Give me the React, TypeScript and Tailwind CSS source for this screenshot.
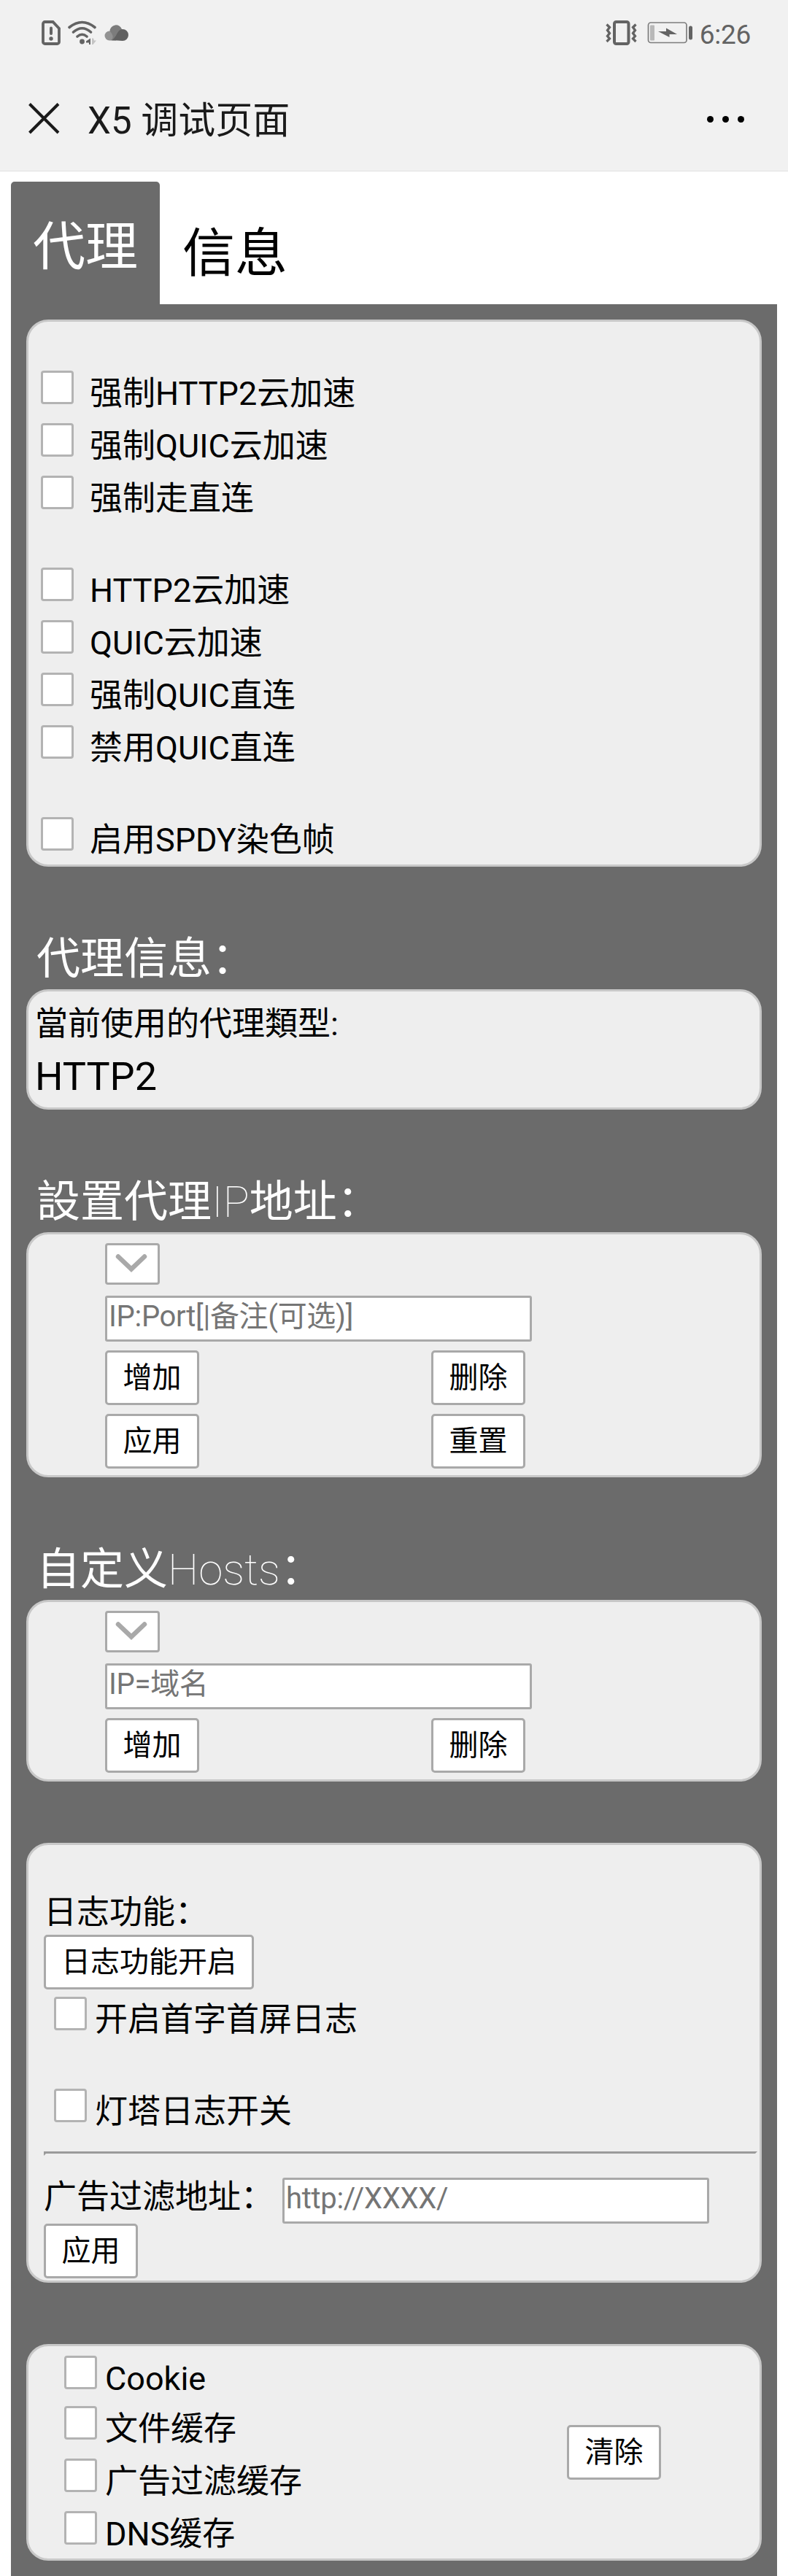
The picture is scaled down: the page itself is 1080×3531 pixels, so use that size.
import React from "react";

function Check({ label, gap = "gap-[22px]", height = "h-[72px]" }: { label: string; gap?: string; height?: string }) {
  return (
    <label className={`flex items-start ${gap} ${height}`}>
      <input
        type="checkbox"
        className="mt-[4px] h-[46px] w-[45px] shrink-0 appearance-none rounded-[4px] border-[3px] border-[#b3b3b3] bg-white"
      />
      <span className="whitespace-nowrap text-[45px] leading-[72px]">{label}</span>
    </label>
  );
}

function Btn({ label, className = "w-[129px]" }: { label: string; className?: string }) {
  return (
    <button
      className={`flex h-[75px] shrink-0 items-center justify-center whitespace-nowrap rounded-[5px] border-[3px] border-[#a9a9a9] bg-white text-[40px] leading-none ${className}`}
    >
      {label}
    </button>
  );
}

function Field({ placeholder }: { placeholder: string }) {
  return (
    <input
      placeholder={placeholder}
      className="block h-[63px] w-[585px] rounded-[3px] border-[3px] border-[#a9a9a9] bg-white px-[2px] pb-[7px] text-[40px] leading-[50px] tracking-[-0.3px] placeholder:text-[#757575]"
    />
  );
}

function Select() {
  return (
    <div className="flex h-[57px] w-[75px] items-center justify-center rounded-[4px] border-[3px] border-[#a9a9a9] bg-white pr-[3px]">
      <svg width="44" height="28" viewBox="0 0 44 28" fill="none" className="-mt-[2px] shrink-0">
        <path d="M4 4.500 22 21.500 40 4.500" stroke="#a9a9a9" strokeWidth="6.500" strokeLinecap="round" />
      </svg>
    </div>
  );
}

function Heading({ children }: { children: React.ReactNode }) {
  return (
    <h2 className="flex h-[168px] items-end pb-[11px] pl-[14px] text-[60px] leading-[60px] text-white">
      <span className="whitespace-nowrap">{children}</span>
    </h2>
  );
}

function Card({ className, children }: { className: string; children: React.ReactNode }) {
  return (
    <section className={`overflow-hidden rounded-[30px] border-[3px] border-[#c8c8c8] bg-[#eee] ${className}`}>
      {children}
    </section>
  );
}

function StatusBar() {
  return (
    <div className="flex h-[90px] items-center justify-between pl-[57px] pr-[51px] text-[#636363]">
      <div className="flex items-center">
        <svg width="26" height="34" viewBox="0 0 26 34" fill="none">
          <path d="M4.500 2H15.500L24 11V29.500A2.500 2.500 0 0 1 21.500 32H4.500A2.500 2.500 0 0 1 2 29.500V4.500A2.500 2.500 0 0 1 4.500 2Z" stroke="currentColor" strokeWidth="3.800" />
          <path d="M13 10.500V18" stroke="currentColor" strokeWidth="4" strokeLinecap="round" />
          <circle cx="13" cy="25" r="2.700" fill="currentColor" />
        </svg>
        <svg width="40" height="34" viewBox="0 0 40 34" fill="none" className="ml-[10px]">
          <path d="M2 9.500Q19.500 -4.500 37 9.500M7.500 16Q19.500 5.500 31.500 16M13 22Q19.500 16.500 26 22" stroke="currentColor" strokeWidth="3.600" strokeLinecap="round" />
          <circle cx="19.500" cy="29" r="3.400" fill="currentColor" />
          <path d="M31 24.500V33H29V30.500H25V28.500Z" fill="currentColor" />
          <path d="M33 24.500V33H34.500L39 27.500H36L35 24.500Z" fill="#c4c4c4" />
        </svg>
        <svg width="33" height="24" viewBox="0 0 33 24" className="ml-[10px]">
          <path d="M7 9.500A6.500 6.500 0 0 0 7 22.500H16V9.500Z" fill="#929292" />
          <path d="M7.500 9.500A8.500 8.500 0 0 1 24 7L16 22H9Q15 18 7.500 9.500Z" fill="#7c7c7c" />
          <path d="M18 12Q21 7 25 7A7.800 7.800 0 0 1 25 23Q18 22.300 10 22.300Q14 20 18 12Z" fill="#606060" />
        </svg>
      </div>
      <div className="flex items-center">
        <svg width="43" height="34" viewBox="0 0 43 34" fill="none" stroke="currentColor">
          <rect x="12" y="2" width="19.500" height="30" rx="2.500" strokeWidth="4" />
          <path d="M1.500 5.500 5.500 9.500 2.500 13.500 5.500 17.500 2.500 21.500 5.500 25 1.500 29M41.500 5.500 37.500 9.500 40.500 13.500 37.500 17.500 40.500 21.500 37.500 25 41.500 29" strokeWidth="3.300" />
        </svg>
        <svg width="64" height="30" viewBox="0 0 64 30" className="ml-[14px]">
          <rect x="1.500" y="1" width="52.500" height="27.500" rx="3.500" fill="none" stroke="#7d7d7d" strokeWidth="1.700" />
          <rect x="4" y="4.500" width="6" height="21" rx="1" fill="#b8b8b8" />
          <path d="M15 13H26V8.500L41 17H30.500V21Z" fill="currentColor" />
          <rect x="57" y="5.500" width="5" height="19" rx="2.500" fill="currentColor" />
        </svg>
        <span className="ml-[8px] mt-[4px] text-[37px] leading-none tracking-[-0.3px]">6:26</span>
      </div>
    </div>
  );
}

export default function App() {
  return (
    <div className="h-[3531px] w-[1080px] overflow-hidden bg-white font-['Roboto','Noto_Sans_CJK_SC',sans-serif] text-black">
      <header className="h-[235px] border-b border-[#e0e0e0] bg-[#f1f1f1]">
        <StatusBar />
        <div className="mt-[6px] flex h-[138px] items-center pl-[39px] pr-[60px]">
          <svg width="43" height="43" viewBox="0 0 43 43" className="-mt-[6px]">
            <path d="M1.500 1.500 41 41M41 1.500 1.500 41" stroke="#1a1a1a" strokeWidth="4" />
          </svg>
          <h1 className="ml-[38px] text-[51px] leading-none text-[#1a1a1a]">X5 调试页面</h1>
          <div className="-mt-[3px] ml-auto flex gap-3">
            <i className="h-[9px] w-[9px] rounded-full bg-black" />
            <i className="h-[9px] w-[9px] rounded-full bg-black" />
            <i className="h-[9px] w-[9px] rounded-full bg-black" />
          </div>
        </div>
      </header>

      <main className="px-[15px] pt-[14px]">
        <nav className="flex h-[168px] text-[72px] leading-[72px]">
          <div className="w-[204px] rounded-t-[5px] bg-[#6b6b6b] pl-[30px] pt-[54px] text-white">代理</div>
          <div className="pl-[31px] pt-[63px]">信息</div>
        </nav>

        <div className="h-[3114px] bg-[#6b6b6b] px-[21px] pt-[21px]">
          <Card className="h-[750px] pl-[17px] pt-[63px]">
            <Check label="强制HTTP2云加速" />
            <Check label="强制QUIC云加速" />
            <Check label="强制走直连" />
            <div className="h-[54px]" />
            <Check label="HTTP2云加速" />
            <Check label="QUIC云加速" />
            <Check label="强制QUIC直连" />
            <Check label="禁用QUIC直连" />
            <div className="h-[54px]" />
            <Check label="启用SPDY染色帧" />
          </Card>

          <Heading>代理信息：</Heading>
          <Card className="h-[165px] pl-[9px] pt-[13px]">
            <p className="text-[45px] leading-[63px]">當前使用的代理類型:</p>
            <p className="text-[54px] leading-[81px]">HTTP2</p>
          </Card>

          <Heading>
            設置代理<span className="font-thin">IP</span>地址：
          </Heading>
          <Card className="h-[336px] pl-[105px] pt-[12px]">
            <Select />
            <div className="mt-[15px]">
              <Field placeholder="IP:Port[|备注(可选)]" />
            </div>
            <div className="mt-[12px] grid w-[576px] grid-cols-[129px_129px] justify-between gap-y-[12px]">
              <Btn label="增加" />
              <Btn label="删除" />
              <Btn label="应用" />
              <Btn label="重置" />
            </div>
          </Card>

          <Heading>
            自定义<span className="font-thin">Hosts</span>：
          </Heading>
          <Card className="h-[249px] pl-[105px] pt-[12px]">
            <Select />
            <div className="mt-[15px]">
              <Field placeholder="IP=域名" />
            </div>
            <div className="mt-[12px] flex w-[576px] justify-between">
              <Btn label="增加" />
              <Btn label="删除" />
            </div>
          </Card>

          <Card className="mt-[84px] h-[603px] pl-[21px] pr-[3px] pt-[61px]">
            <p className="h-[62px] text-[45px] leading-[63px]">日志功能：</p>
            <Btn label="日志功能开启" className="w-[288px]" />
            <div className="mt-[6px] flex flex-col gap-[54px] pl-[14px]">
              <Check label="开启首字首屏日志" gap="gap-[11px]" />
              <Check label="灯塔日志开关" gap="gap-[11px]" />
            </div>
            <div className="mt-[18px] h-[6px] border-[3px] border-b-[#eee] border-l-[#9a9a9a] border-r-[#eee] border-t-[#9a9a9a]" />
            <div className="mt-[30px] flex items-start gap-[12px]">
              <span className="w-[315px] whitespace-nowrap text-[45px] leading-[54px]">广告过滤地址：</span>
              <Field placeholder="http://XXXX/" />
            </div>
            <Btn label="应用" />
          </Card>

          <Card className="mt-[84px] flex h-[297px] items-start">
            <div className="w-[738px] pl-[49px] pt-[9px]">
              <Check label="Cookie" gap="gap-[11px]" height="h-[69px]" />
              <Check label="文件缓存" gap="gap-[11px]" />
              <Check label="广告过滤缓存" gap="gap-[11px]" />
              <Check label="DNS缓存" gap="gap-[11px]" />
            </div>
            <div className="mt-[108px]">
              <Btn label="清除" />
            </div>
          </Card>
        </div>
      </main>
    </div>
  );
}
